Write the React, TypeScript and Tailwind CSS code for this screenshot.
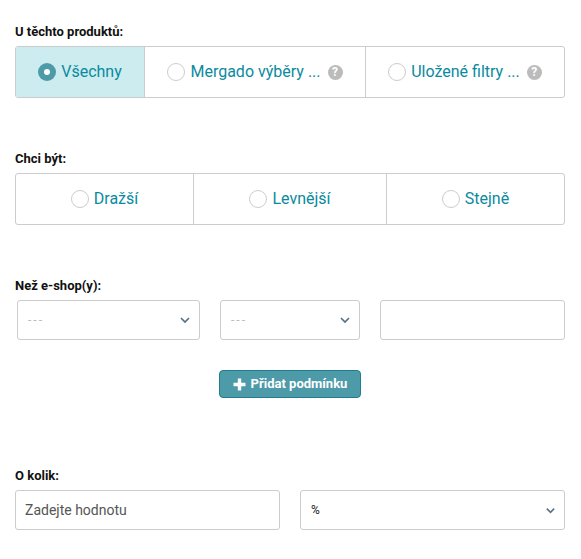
import React from "react";

const Help = () => (
  <span className="ml-[7px] flex h-[15px] w-[15px] shrink-0 items-center justify-center rounded-full bg-[#bbbbbb] text-[12px] font-bold leading-none text-white">?</span>
);

const Radio = ({ on }: { on?: boolean }) =>
  on ? (
    <span className="mr-[5px] flex h-[18px] w-[18px] shrink-0 items-center justify-center rounded-full bg-[#4d9aa9]">
      <span className="h-[6px] w-[6px] rounded-full bg-white" />
    </span>
  ) : (
    <span className="mr-[5px] h-[18px] w-[18px] shrink-0 rounded-full border border-[#cccccc] bg-white" />
  );

const Seg = ({ w, label, on, help, last }: { w: string; label: string; on?: boolean; help?: boolean; last?: boolean }) => (
  <div className={`flex items-center justify-center ${w} ${last ? "" : "border-r border-[#cccccc]"} ${on ? "bg-[#cdecef]" : ""}`}>
    <Radio on={on} />
    <span className="text-[16px] leading-none text-[#0a8aa0]">{label}</span>
    {help && <Help />}
  </div>
);

const Chevron = ({ size = 12 }: { size?: number }) => (
  <svg width={size} height={size} viewBox="0 0 12 12" fill="none" className="shrink-0">
    <path d="M2 4l4 4 4-4" stroke="#5a7080" strokeWidth="1.7" />
  </svg>
);

const Label = ({ children, className }: { children: string; className: string }) => (
  <div className={`text-[13px] font-bold leading-[16px] text-[#111111] ${className}`}>{children}</div>
);

const Placeholder = () => <span className="text-[12px] tracking-[2px] text-[#bbbbbb]">---</span>;

export default function App() {
  return (
    <div className="h-[559px] w-[581px] bg-white px-[15px] pt-[24px] font-['Roboto',sans-serif]">
      <Label className="mb-[6px]">U těchto produktů:</Label>
      <div className="flex h-[52px] w-[550px] overflow-hidden rounded-[3px] border border-[#cccccc]">
        <Seg w="w-[129px]" label="Všechny" on />
        <Seg w="w-[221px]" label="Mergado výběry ..." help />
        <Seg w="flex-1" label="Uložené filtry ..." help last />
      </div>

      <Label className="mb-[6px] mt-[53px]">Chci být:</Label>
      <div className="flex h-[52px] w-[550px] overflow-hidden rounded-[3px] border border-[#cccccc]">
        <Seg w="w-[178px]" label="Dražší" />
        <Seg w="w-[193px]" label="Levnější" />
        <Seg w="flex-1" label="Stejně" last />
      </div>

      <Label className="mb-[6px] mt-[53px]">Než e-shop(y):</Label>
      <div className="flex h-[40px] w-[550px] gap-5 pl-[2px]">
        <div className="flex w-[183px] items-center justify-between rounded-[3px] border border-[#cccccc] pl-[10px] pr-[8px]">
          <Placeholder />
          <Chevron />
        </div>
        <div className="flex w-[140px] items-center justify-between rounded-[3px] border border-[#cccccc] pl-[10px] pr-[8px]">
          <Placeholder />
          <Chevron />
        </div>
        <div className="w-[185px] rounded-[3px] border border-[#cccccc]" />
      </div>

      <div className="mt-[30px] flex w-[550px] justify-center">
        <button className="flex h-[28px] w-[142px] items-center justify-center rounded-[4px] border border-[#1f7f8f] bg-[#4d9aa9] text-[13px] font-bold text-white">
          <svg width="13" height="13" viewBox="0 0 13 13" className="mr-[5px]">
            <path d="M6.5 0.5v12M0.5 6.5h12" stroke="#ffffff" strokeWidth="3.4" />
          </svg>
          Přidat podmínku
        </button>
      </div>

      <Label className="mb-[6px] mt-[70px]">O kolik:</Label>
      <div className="flex h-[40px] w-[550px] gap-5">
        <div className="flex w-[265px] items-center rounded-[3px] border border-[#cccccc] pl-[9px] text-[14px] text-[#555555]">Zadejte hodnotu</div>
        <div className="flex w-[265px] items-center justify-between rounded-[3px] border border-[#cccccc] pl-[10px] pr-[8px] text-[12px] text-[#222222]">
          <span>%</span>
          <Chevron size={11} />
        </div>
      </div>
    </div>
  );
}
